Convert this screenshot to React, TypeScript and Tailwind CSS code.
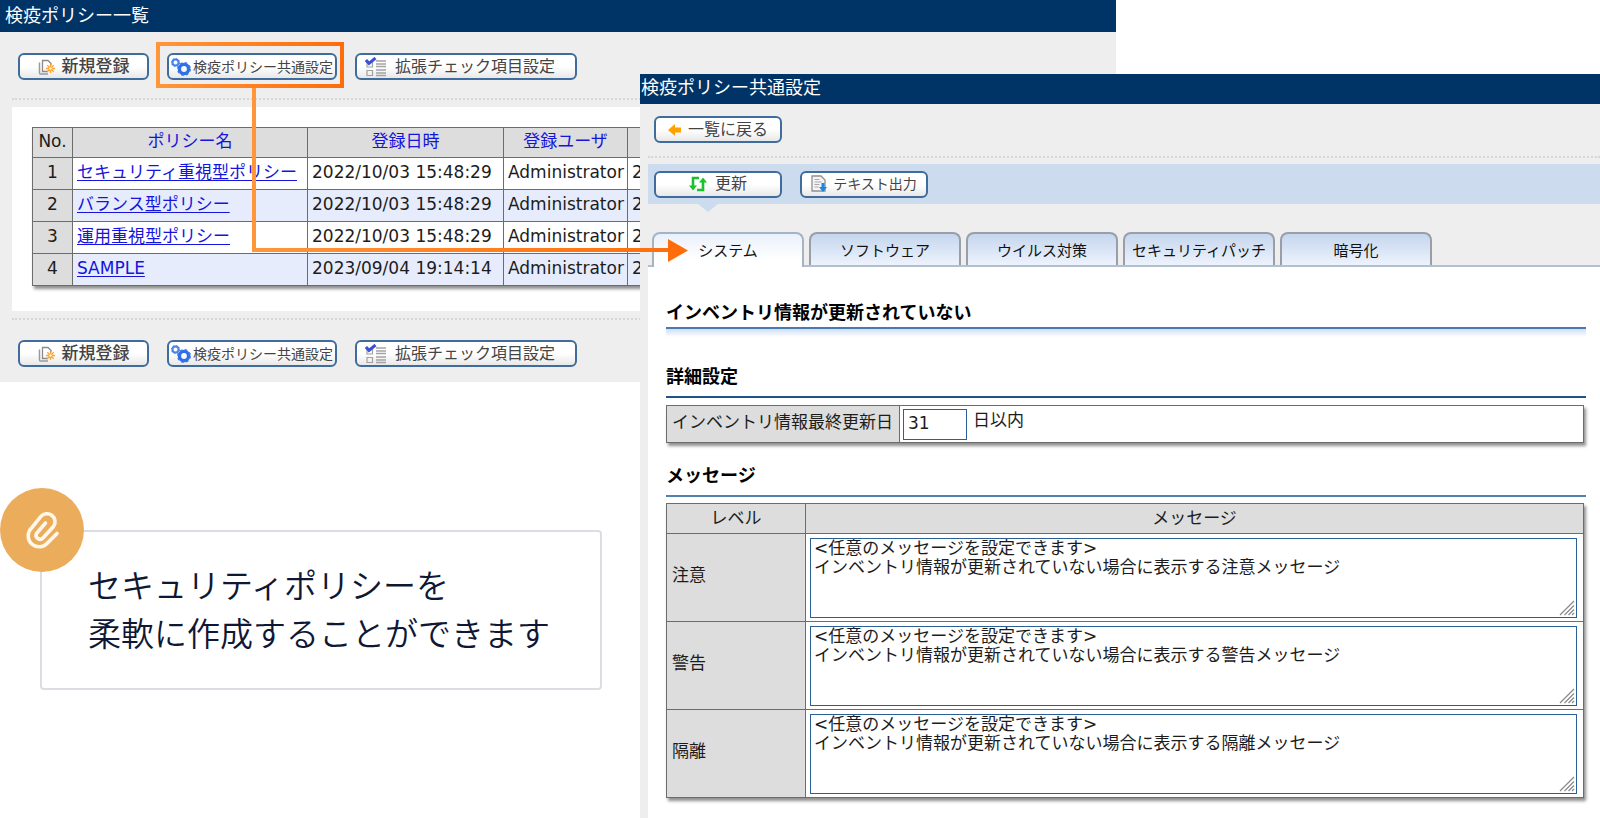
import type { ReactNode } from "react";

const policies = [
  { no: 1, name: "セキュリティ重視型ポリシー", date: "2022/10/03 15:48:29", user: "Administrator" },
  { no: 2, name: "バランス型ポリシー", date: "2022/10/03 15:48:29", user: "Administrator" },
  { no: 3, name: "運用重視型ポリシー", date: "2022/10/03 15:48:29", user: "Administrator" },
  { no: 4, name: "SAMPLE", date: "2023/09/04 19:14:14", user: "Administrator" },
];

const tabs = ["システム", "ソフトウェア", "ウイルス対策", "セキュリティパッチ", "暗号化"];

const levels = ["注意", "警告", "隔離"];

function NewIcon() {
  return (
    <svg viewBox="0 0 18 16" className="h-4 w-[18px] shrink-0" fill="none">
      <path d="M1.500 3.500v10.500a1 1 0 0 0 1 1h7.500" stroke="#9a9a9a" strokeWidth="1.500" />
      <path d="M10 12.500H4.500V1.500h5.500l3 3v2" stroke="#8a8a8a" strokeWidth="1.300" />
      <path d="M12.500 5v9M8 9.500h9M9.300 6.300l6.400 6.400M15.700 6.300l-6.400 6.400" stroke="#fba534" strokeWidth="1.300" />
      <circle cx="12.500" cy="9.500" r="1.300" fill="#fff3d8" />
    </svg>
  );
}

function GearsIcon() {
  return (
    <svg viewBox="0 0 20 18" className="h-[18px] w-5 shrink-0" fill="none">
      <circle cx="4.500" cy="4.500" r="3" stroke="#4a86ee" strokeWidth="2" />
      <circle cx="4.500" cy="4.500" r="4" stroke="#3f7be0" strokeWidth="1" strokeDasharray="1.600 1.500" />
      <circle cx="13" cy="11" r="4.600" stroke="#2f6fe8" strokeWidth="3.400" />
      <circle cx="13" cy="11" r="6.200" stroke="#3d7cea" strokeWidth="1.500" strokeDasharray="2.600 2.270" />
    </svg>
  );
}

function ChecklistIcon() {
  return (
    <svg viewBox="0 0 22 20" className="h-5 w-[22px] shrink-0" fill="none">
      <path d="M2 5.500h5.500v4.500H2zM2 13.500h5.500v5H2z" stroke="#a2a2a2" strokeWidth="1.200" />
      <path d="M11 4h10M11 7h10M11 9.500h10M11 13h10M11 16h10M11 18.500h10" stroke="#a4a4a4" strokeWidth="1.400" />
      <path d="M1 3l3 3.500L10.500 1" stroke="#3b50d6" strokeWidth="3" />
    </svg>
  );
}

function BackIcon() {
  return (
    <svg viewBox="0 0 14 12" className="h-3 w-3.5 shrink-0">
      <path d="M0 6l7-6v3.500h6v5H7V12z" fill="#ffa200" />
    </svg>
  );
}

function RefreshIcon() {
  return (
    <svg viewBox="0 0 18 16" className="h-4 w-[18px] shrink-0" fill="none">
      <path d="M10 2H4v9" stroke="#19c22c" strokeWidth="2.600" />
      <path d="M0 9.500h8L4 14.500z" fill="#19c22c" />
      <path d="M8 14h6V5" stroke="#19c22c" strokeWidth="2.600" />
      <path d="M10 6.500h8L14 1.500z" fill="#19c22c" />
    </svg>
  );
}

function ExportIcon() {
  return (
    <svg viewBox="0 0 16 18" className="h-[18px] w-4 shrink-0" fill="none">
      <path d="M1 1h9l4 4v11H1z" fill="#f4f4f4" stroke="#909090" strokeWidth="1.300" />
      <path d="M3.500 4.500h5M3.500 7h7M3.500 9.500h5M3.500 12h4" stroke="#a8a8a8" />
      <path d="M12 8v6" stroke="#1787ea" strokeWidth="3" />
      <path d="M8 12h8l-4 5z" fill="#1787ea" />
    </svg>
  );
}

function ToolButton({ icon, size, children }: { icon: ReactNode; size: string; children: ReactNode }) {
  return (
    <button
      type="button"
      className={
        "flex h-[27px] items-center justify-center whitespace-nowrap rounded-md border-2 border-[#3f6c9c] bg-linear-to-b from-white from-50% to-[#e8e8e8] leading-none text-[#444444] " +
        size
      }
    >
      {icon}
      <span>{children}</span>
    </button>
  );
}

function ListToolbar() {
  return (
    <div className="flex gap-[18px] pl-[18px]">
      <ToolButton icon={<NewIcon />} size="w-[131px] gap-1.5 text-[17px] font-medium">
        新規登録
      </ToolButton>
      <ToolButton icon={<GearsIcon />} size="w-[170px] gap-0.5 text-[14px]">
        検疫ポリシー共通設定
      </ToolButton>
      <ToolButton icon={<ChecklistIcon />} size="w-[222px] gap-2 pr-3 text-[16px]">
        拡張チェック項目設定
      </ToolButton>
    </div>
  );
}

function PolicyList() {
  const cell = "border border-[#6c6c6c] px-1 pt-0 pb-1";
  return (
    <section className="col-span-2 col-start-1 row-span-2 row-start-1 self-start bg-[#eeeeee] pb-[15px]">
      <h1 className="h-8 bg-[#003366] pl-[5px] text-[18px] leading-8 text-white">検疫ポリシー一覧</h1>
      <div className="pt-[21px]">
        <ListToolbar />
      </div>
      <div className="mt-[18px] ml-3 border-t-2 border-dotted border-[#d6d6d6]" />
      <div className="mt-[7px] ml-3 bg-white pt-5 pb-[25px] pl-5">
        <table className="table-fixed w-[700px] border-collapse bg-white text-[17px] leading-[22px] text-[#1c1c1c] shadow-[2px_3px_3px_#8f8f8f]">
          <colgroup>
            <col className="w-[40px]" />
            <col className="w-[235px]" />
            <col className="w-[196px]" />
            <col className="w-[124px]" />
            <col />
          </colgroup>
          <thead>
            <tr className="h-[30px] bg-[#dddddd]">
              <th className={cell + " font-normal"}>No.</th>
              {["ポリシー名", "登録日時", "登録ユーザ"].map((label) => (
                <th key={label} className={cell + " font-normal"}>
                  <a href="#sort" className="text-[#1414dd]">
                    {label}
                  </a>
                </th>
              ))}
              <th className={cell} />
            </tr>
          </thead>
          <tbody>
            {policies.map((p) => (
              <tr key={p.no} className="h-8 whitespace-nowrap even:bg-[#e6ecfb]">
                <td className={cell + " bg-[#dddddd] text-center"}>{p.no}</td>
                <td className={cell}>
                  <a href="#policy" className="text-[#1414dd] underline underline-offset-2">
                    {p.name}
                  </a>
                </td>
                <td className={cell}>{p.date}</td>
                <td className={cell}>{p.user}</td>
                <td className={cell}>2</td>
              </tr>
            ))}
          </tbody>
        </table>
      </div>
      <div className="mt-[7px] mb-5 ml-3 border-t-2 border-dotted border-[#d6d6d6]" />
      <ListToolbar />
    </section>
  );
}

function MessageField({ level }: { level: string }) {
  return (
    <div className="relative">
      <textarea
        id={"message-" + level}
        className="block h-20 w-full resize-none border border-[#2b5f98] bg-white px-[3px] text-[17px] leading-[19px]"
        defaultValue={
          "<任意のメッセージを設定できます>\nインベントリ情報が更新されていない場合に表示する" + level + "メッセージ"
        }
      />
      <svg viewBox="0 0 16 16" className="pointer-events-none absolute right-0.5 bottom-0.5 size-4" fill="none">
        <path d="M1 15L15 1M5.500 15L15 5.500M9.500 15L15 9.500M13 15l2-2" stroke="#8c8c8c" strokeWidth="1.300" />
      </svg>
    </div>
  );
}

function CommonSettings() {
  return (
    <section className="z-10 col-span-2 col-start-2 row-span-2 row-start-2 flex flex-col bg-[#eeeeee]">
      <h1 className="h-[30px] bg-[#003366] pl-px text-[18px] leading-7 text-white">検疫ポリシー共通設定</h1>
      <div className="flex grow flex-col pl-2">
        <div className="flex pt-3 pb-[13px] pl-1.5">
          <ToolButton icon={<BackIcon />} size="w-[128px] gap-1.5 text-[16px]">
            一覧に戻る
          </ToolButton>
        </div>
        <div className="border-t-2 border-dotted border-[#d6d6d6]" />
        <div className="mt-1.5 flex h-10 items-center gap-[18px] bg-[#ccdcee] pl-1.5">
          <ToolButton icon={<RefreshIcon />} size="w-[128px] gap-2 text-[16px]">
            更新
          </ToolButton>
          <ToolButton icon={<ExportIcon />} size="w-[128px] gap-1.5 text-[14px]">
            テキスト出力
          </ToolButton>
        </div>
        <svg viewBox="0 0 20 8" className="ml-[50px] h-2 w-5">
          <path d="M0 0h20L10 8z" fill="#ccdcee" />
        </svg>
        <div role="tablist" className="mt-5 flex gap-[5px] border-b-2 border-[#b3bfcc] pl-1">
          {tabs.map((tab, i) => (
            <button
              key={tab}
              type="button"
              role="tab"
              aria-selected={i === 0}
              className={
                "w-[152px] whitespace-nowrap rounded-t-lg border-2 border-b-0 pt-1 text-[15px] leading-none text-[#111111] " +
                (i === 0
                  ? "-mb-0.5 h-[35px] border-[#a5b4c4] bg-linear-to-b from-[#eaf1fb] to-white to-80% pb-0.5"
                  : "h-[33px] border-[#999fa8] bg-linear-to-b from-[#c5d6ee] to-[#edf3fc]")
              }
            >
              {tab}
            </button>
          ))}
        </div>
        <div className="grow bg-white pr-[14px] pb-[22px] pl-[18px]">
          <h2 className="border-b-2 border-[#4a78b0] pt-8 text-[18px] leading-7 font-bold text-black">
            インベントリ情報が更新されていない
          </h2>
          <div className="h-2 bg-linear-to-b from-[#cfdef4] to-white" />
          <h3 className="mt-[26px] border-b-2 border-[#1f5288] pb-[5px] text-[18px] leading-7 font-bold text-black">
            詳細設定
          </h3>
          <div className="mt-[7px] mr-0.5 flex h-[38px] border border-[#6c6c6c] text-[17px] text-[#1c1c1c] shadow-[2px_3px_3px_#8f8f8f]">
            <label
              htmlFor="days"
              className="flex w-[233px] items-center whitespace-nowrap border-r border-[#6c6c6c] bg-[#dddddd] pb-0.5 pl-[5px]"
            >
              インベントリ情報最終更新日
            </label>
            <input
              id="days"
              type="text"
              defaultValue="31"
              className="mt-[3px] ml-[3px] h-[31px] w-16 border border-[#2b5f98] bg-white px-1 pb-1 text-[17px]"
            />
            <span className="ml-1.5 leading-7">日以内</span>
          </div>
          <h3 className="mt-[19px] border-b-2 border-[#5580ab] pb-[5px] text-[18px] leading-7 font-bold text-black">
            メッセージ
          </h3>
          <div className="mt-1.5 mr-0.5">
            <table className="w-full table-fixed border-collapse text-[17px] text-[#1c1c1c] shadow-[2px_3px_3px_#8f8f8f]">
              <colgroup>
                <col className="w-[139px]" />
                <col />
              </colgroup>
              <thead>
                <tr className="h-[30px] bg-[#dddddd] leading-6">
                  <th className="border border-[#6c6c6c] p-0 pb-0.5 font-normal">レベル</th>
                  <th className="border border-[#6c6c6c] p-0 pb-0.5 font-normal">メッセージ</th>
                </tr>
              </thead>
              <tbody>
                {levels.map((level) => (
                  <tr key={level} className="h-[88px] bg-white">
                    <td className="border border-[#6c6c6c] bg-[#dddddd] pb-1 pl-[5px]">
                      <label htmlFor={"message-" + level}>{level}</label>
                    </td>
                    <td className="border border-[#6c6c6c] py-0 pr-1.5 pl-1">
                      <MessageField level={level} />
                    </td>
                  </tr>
                ))}
              </tbody>
            </table>
          </div>
        </div>
      </div>
    </section>
  );
}

function Callout() {
  return (
    <aside className="relative col-start-1 row-start-3 pt-[148px] pr-[38px] pl-10">
      <div className="rounded border-2 border-[#dcdde3] pt-[31px] pb-[29px] pl-[46px]">
        <p className="whitespace-nowrap text-[33px] leading-[48px] font-[350] text-[#0e1733]">
          セキュリティポリシーを
          <br />
          柔軟に作成することができます
        </p>
      </div>
      <div className="absolute top-[106px] left-0 flex size-[84px] items-center justify-center rounded-full bg-[#ebad5c]">
        <svg viewBox="0 0 36 40" className="h-10 w-9" fill="none" stroke="#fff8ea" strokeWidth="3.600" strokeLinecap="round">
          <path d="M33 23.500L23 33.500A11 11 0 0 1 5.500 20.500L16.500 7A8 8 0 0 1 29.500 16.500L19 28A4 4 0 0 1 12.500 23.500L21.500 13" />
        </svg>
      </div>
    </aside>
  );
}

function Pointer() {
  return (
    <svg viewBox="0 0 690 270" className="pointer-events-none absolute top-0 left-0 z-20 h-[270px] w-[690px]" fill="none">
      <defs>
        <linearGradient id="frame" gradientUnits="userSpaceOnUse" x1="156" y1="0" x2="344" y2="0">
          <stop offset="0" stopColor="#ff963a" />
          <stop offset="1" stopColor="#ff6c0a" />
        </linearGradient>
        <linearGradient id="arrow" gradientUnits="userSpaceOnUse" x1="252" y1="0" x2="688" y2="0">
          <stop offset="0" stopColor="#ff963a" />
          <stop offset="1" stopColor="#ff6c0a" />
        </linearGradient>
      </defs>
      <rect x="158" y="44" width="184" height="42" stroke="url(#frame)" strokeWidth="4" />
      <path d="M254 88V250H670" stroke="url(#arrow)" strokeWidth="4" />
      <path d="M668 239l20 11.500-20 11.500z" fill="#ff6c0a" />
    </svg>
  );
}

export default function App() {
  return (
    <main className="relative grid min-h-screen grid-cols-[minmax(0,640fr)_minmax(0,476fr)_minmax(0,484fr)] grid-rows-[74px_auto_1fr] overflow-hidden bg-white font-['DejaVu_Sans','Noto_Sans_CJK_JP',sans-serif]">
      <PolicyList />
      <CommonSettings />
      <Callout />
      <Pointer />
    </main>
  );
}
